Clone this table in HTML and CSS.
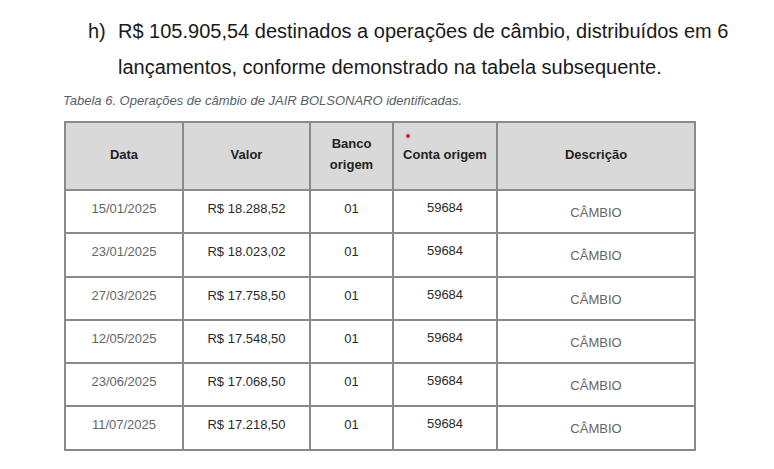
FILE: index.html
```html
<!DOCTYPE html>
<html lang="pt-BR">
<head>
<meta charset="utf-8">
<link rel="stylesheet" href="styles.css">
</head>
<body>
<div class="page">
  <div class="item">
    <span class="marker">h)</span>
    <p class="item-text">R$ 105.905,54 destinados a operações de câmbio, distribuídos em 6 lançamentos, conforme demonstrado na tabela subsequente.</p>
  </div>
  <p class="caption">Tabela 6. Operações de câmbio de JAIR BOLSONARO identificadas.</p>
  <table class="grid">
    <colgroup>
      <col class="c1"><col class="c2"><col class="c3"><col class="c4"><col class="c5">
    </colgroup>
    <thead>
      <tr>
        <th>Data</th>
        <th>Valor</th>
        <th>Banco<br>origem</th>
        <th class="conta-h"><span class="dot"></span>Conta origem</th>
        <th>Descrição</th>
      </tr>
    </thead>
    <tbody>
      <tr><td class="date">15/01/2025</td><td class="val">R$ 18.288,52</td><td class="num">01</td><td class="conta">59684</td><td class="desc">CÂMBIO</td></tr>
      <tr><td class="date">23/01/2025</td><td class="val">R$ 18.023,02</td><td class="num">01</td><td class="conta">59684</td><td class="desc">CÂMBIO</td></tr>
      <tr><td class="date">27/03/2025</td><td class="val">R$ 17.758,50</td><td class="num">01</td><td class="conta">59684</td><td class="desc">CÂMBIO</td></tr>
      <tr><td class="date">12/05/2025</td><td class="val">R$ 17.548,50</td><td class="num">01</td><td class="conta">59684</td><td class="desc">CÂMBIO</td></tr>
      <tr><td class="date">23/06/2025</td><td class="val">R$ 17.068,50</td><td class="num">01</td><td class="conta">59684</td><td class="desc">CÂMBIO</td></tr>
      <tr><td class="date">11/07/2025</td><td class="val">R$ 17.218,50</td><td class="num">01</td><td class="conta">59684</td><td class="desc">CÂMBIO</td></tr>
    </tbody>
  </table>
</div>
</body>
</html>
```
FILE: styles.css
```css
html, body {
  margin: 0;
  padding: 0;
  background: #ffffff;
}
body {
  font-family: "Liberation Sans", Arial, sans-serif;
  color: #1a1a1a;
}
.page {
  padding: 13px 0 0 64px;
  width: 700px;
}
.item {
  display: flex;
  margin-left: 24px;
}
.marker {
  width: 30px;
  flex: none;
  font-size: 20px;
  line-height: 36px;
}
.item-text {
  margin: 0;
  width: 650px;
  font-size: 20px;
  line-height: 36px;
}
.caption {
  margin: 8px 0 13px -1px;
  font-size: 13px;
  line-height: 15px;
  font-style: italic;
  color: #56606b;
}
.grid {
  border-collapse: collapse;
  table-layout: fixed;
  width: 630px;
}
.c1 { width: 118px; }
.c2 { width: 127px; }
.c3 { width: 83px; }
.c4 { width: 104px; }
.c5 { width: 198px; }
.grid th, .grid td {
  border: 2px solid #8a8a8a;
  text-align: center;
  padding: 0;
}
.grid th {
  background: #d9d9d9;
  height: 62px;
  padding-bottom: 4px;
  font-size: 13px;
  font-weight: bold;
  line-height: 21px;
  color: #222;
}
.conta-h {
  position: relative;
}
.dot {
  position: absolute;
  left: 12px;
  top: 11px;
  width: 4px;
  height: 4px;
  border-radius: 50%;
  background: #e02020;
}
.grid td {
  height: 43.3px;
  font-size: 13px;
  line-height: 15px;
  vertical-align: top;
  padding-top: 10px;
  box-sizing: border-box;
}
.date { color: #666; }
.val { color: #2a2a2a; }
.num { color: #2a2a2a; }
.conta { color: #2a2a2a; padding-top: 9px !important; }
.desc { color: #666; padding-top: 14px !important; }
```
